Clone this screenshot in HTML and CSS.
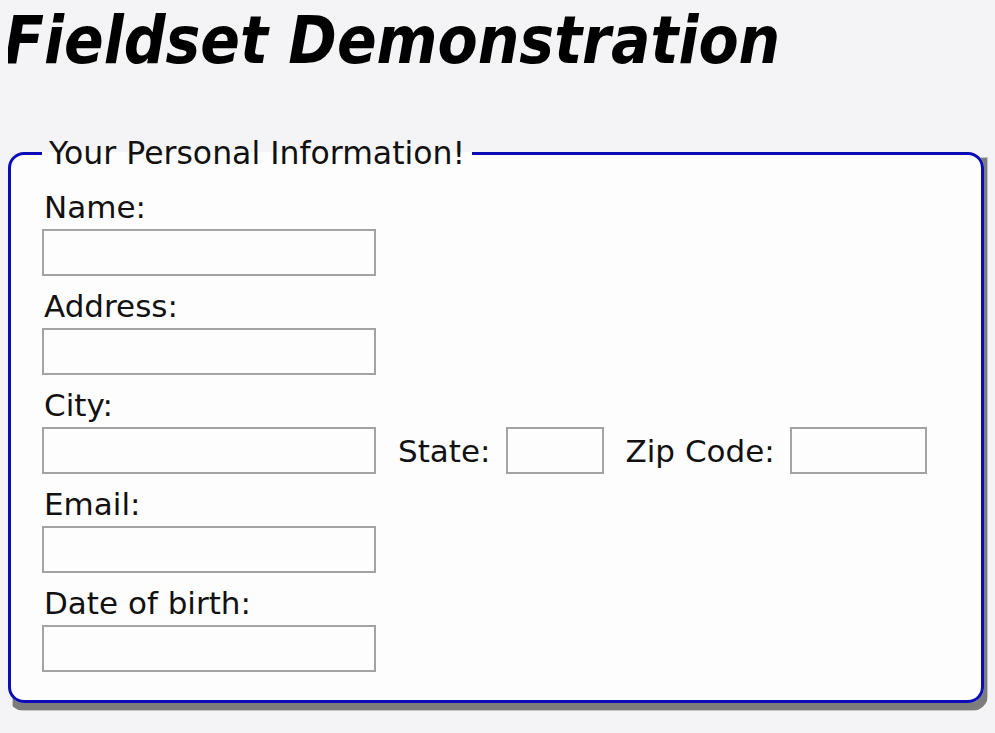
FILE: index.html
```html
<!DOCTYPE html>
<html lang="en">
<head>
<meta charset="utf-8">
<title>Fieldset Demonstration</title>
<link rel="stylesheet" href="styles.css">
</head>
<body>
<h1 class="title">Fieldset Demonstration</h1>
<form class="form">
  <fieldset class="info">
    <legend class="info-legend">Your Personal Information!</legend>
    <div class="fields">
      <div class="field">
        <label class="label" for="name">Name:</label>
        <input class="text" id="name" type="text">
      </div>
      <div class="field">
        <label class="label" for="address">Address:</label>
        <input class="text" id="address" type="text">
      </div>
      <div class="field">
        <label class="label" for="city">City:</label>
        <div class="row">
          <input class="text" id="city" type="text">
          <label class="label inline" for="state">State:</label>
          <input class="text state" id="state" type="text">
          <label class="label inline" for="zip">Zip Code:</label>
          <input class="text zip" id="zip" type="text">
        </div>
      </div>
      <div class="field">
        <label class="label" for="email">Email:</label>
        <input class="text" id="email" type="text">
      </div>
      <div class="field">
        <label class="label" for="dob">Date of birth:</label>
        <input class="text" id="dob" type="text">
      </div>
    </div>
  </fieldset>
</form>
</body>
</html>
```

FILE: styles.css
```css
html {
  background: #f4f4f6;
}

body {
  margin: 6px 7px 8px 8px;
  font-family: "DejaVu Sans", Verdana, sans-serif;
  color: #111;
}

.title {
  margin: 0 0 59px -4px;
  font-family: "DejaVu Sans Condensed", "DejaVu Sans", sans-serif;
  font-stretch: condensed;
  font-weight: bold;
  font-style: italic;
  font-size: 65px;
  line-height: 70px;
  color: #000;
}

/* the form carries the soft drop shadow of the fieldset frame */
.form {
  margin: 0;
  padding: 0 4px 8px 0;
  border-radius: 16px;
  background:
    linear-gradient(#7c7c7c, #7c7c7c) right 1px bottom 1px / calc(100% - 6px) calc(100% - 24px) no-repeat,
    linear-gradient(#c6c6c8, #c6c6c8) right 0 bottom 0 / calc(100% - 4px) calc(100% - 22px) no-repeat;
}

.info {
  margin: 0;
  padding: 18px 20px 28px 31px;
  border: 3px solid #0b0bb8;
  border-radius: 16px;
  background-color: #fdfdfe;
  min-width: 0;
}

.info-legend {
  padding: 0 7px;
  font-size: 31.5px;
  line-height: 36px;
}

.fields {
  display: flex;
  flex-direction: column;
  gap: 12px;
}

.field {
  display: flex;
  flex-direction: column;
  align-items: flex-start;
  gap: 4px;
}

.label {
  display: block;
  font-size: 31px;
  line-height: 36px;
  padding-left: 2px;
}

.text {
  box-sizing: border-box;
  width: 334px;
  height: 47px;
  margin: 0;
  border: 2px solid #a3a3a3;
  background: #fdfdfe;
  font: inherit;
}

.row {
  display: flex;
  align-items: center;
}

.label.inline {
  margin: 0 15px 0 22px;
  padding-left: 0;
}

.text.state {
  width: 98px;
}

.text.zip {
  width: 137px;
}
```
